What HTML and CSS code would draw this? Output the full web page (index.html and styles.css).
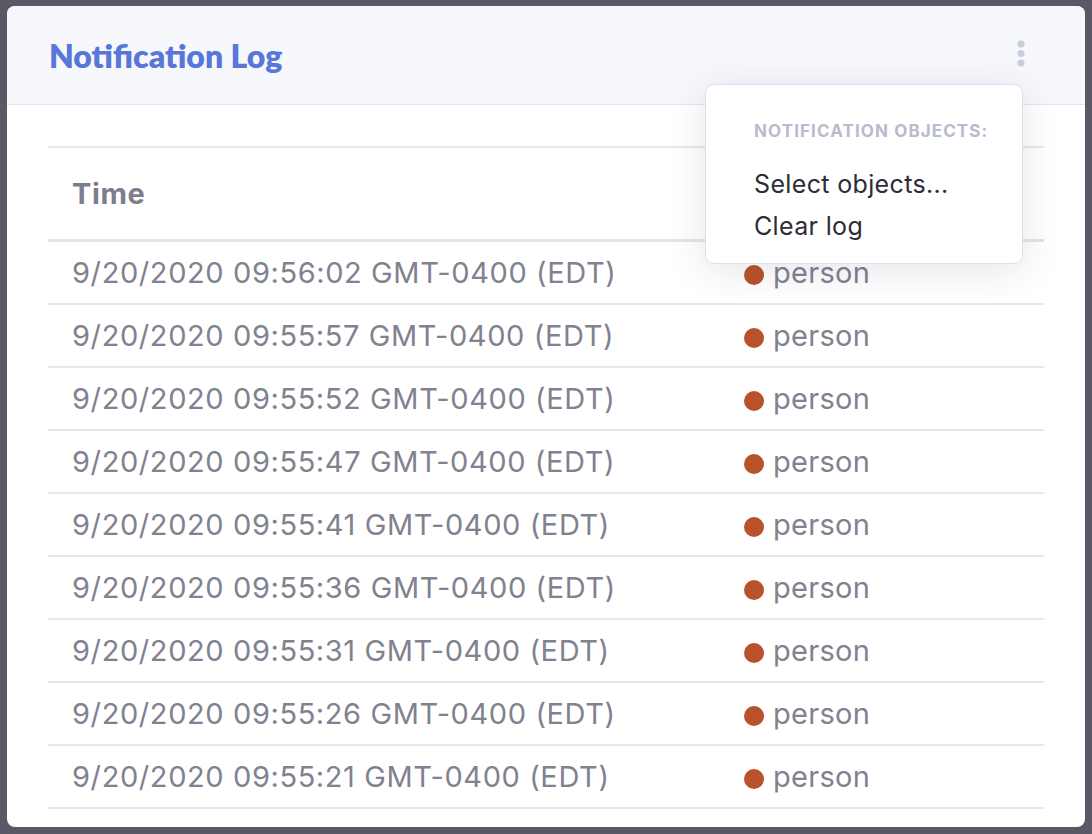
FILE: index.html
```html
<!DOCTYPE html>
<html>
<head>
<meta charset="utf-8">
<link rel="stylesheet" href="styles.css">
</head>
<body>
<div class="card">
  <div class="card-header">
    <h1 class="title">Notification Log</h1>
    <button class="kebab" aria-label="menu">
      <svg width="8" height="28" viewBox="0 0 8 28"><circle cx="4" cy="4" r="3.6" fill="#cbcddd"/><circle cx="4" cy="13.5" r="3.6" fill="#cbcddd"/><circle cx="4" cy="23" r="3.6" fill="#cbcddd"/></svg>
    </button>
    <div class="menu">
      <div class="menu-heading">NOTIFICATION OBJECTS:</div>
      <div class="menu-item">Select objects...</div>
      <div class="menu-item">Clear log</div>
    </div>
  </div>
  <div class="card-body">
    <table class="log">
      <thead>
        <tr><th class="c1">Time</th><th class="c2"></th></tr>
      </thead>
      <tbody>
        <tr><td>9/20/2020 09:56:02 GMT-0400 (EDT)</td><td class="obj"><span class="dot"></span>person</td></tr>
        <tr><td>9/20/2020 09:55:57 GMT-0400 (EDT)</td><td class="obj"><span class="dot"></span>person</td></tr>
        <tr><td>9/20/2020 09:55:52 GMT-0400 (EDT)</td><td class="obj"><span class="dot"></span>person</td></tr>
        <tr><td>9/20/2020 09:55:47 GMT-0400 (EDT)</td><td class="obj"><span class="dot"></span>person</td></tr>
        <tr><td>9/20/2020 09:55:41 GMT-0400 (EDT)</td><td class="obj"><span class="dot"></span>person</td></tr>
        <tr><td>9/20/2020 09:55:36 GMT-0400 (EDT)</td><td class="obj"><span class="dot"></span>person</td></tr>
        <tr><td>9/20/2020 09:55:31 GMT-0400 (EDT)</td><td class="obj"><span class="dot"></span>person</td></tr>
        <tr><td>9/20/2020 09:55:26 GMT-0400 (EDT)</td><td class="obj"><span class="dot"></span>person</td></tr>
        <tr><td>9/20/2020 09:55:21 GMT-0400 (EDT)</td><td class="obj"><span class="dot"></span>person</td></tr>
      </tbody>
    </table>
  </div>
</div>
</body>
</html>
```

FILE: styles.css
```css
html, body {
  margin: 0;
  padding: 0;
  background: #585965;
  height: 100%;
  overflow: hidden;
}
body {
  padding: 6px 7px 0 7px;
  box-sizing: border-box;
  font-family: Inter, "Noto Sans", sans-serif;
}
.card {
  width: 1078px;
  height: 821px;
  background: #fff;
  border-radius: 8px;
  overflow: hidden;
  display: flex;
  flex-direction: column;
}
.card-header {
  position: relative;
  height: 98px;
  flex: none;
  background: #f7f8fc;
  border-bottom: 1px solid #e1e2ec;
  display: flex;
  align-items: center;
  justify-content: space-between;
  padding: 0 60px 0 42px;
}
.title {
  margin: 0;
  font-family: Lato, "Noto Sans", sans-serif;
  font-weight: 800;
  font-size: 32px;
  color: #5877d9;
  letter-spacing: 0;
}
.kebab {
  border: 0;
  background: none;
  padding: 0;
  display: flex;
  margin-top: -3px;
}
.menu {
  position: absolute;
  left: 698px;
  top: 78px;
  width: 316px;
  height: 178px;
  background: #fff;
  border: 1px solid #dfe0ec;
  border-radius: 9px;
  box-shadow: 0 6px 40px rgba(40, 40, 70, 0.12);
  box-sizing: content-box;
  padding: 0;
  z-index: 5;
}
.menu-heading {
  margin: 36px 0 0 48px;
  font-size: 17px;
  font-weight: 700;
  color: #b8bbcc;
  letter-spacing: 1.1px;
  line-height: 20px;
}
.menu-heading + .menu-item {
  margin-top: 22px;
}
.menu-item {
  margin-left: 48px;
  font-size: 25px;
  letter-spacing: 0.35px;
  color: #2c2d39;
  line-height: 42px;
}
.card-body {
  padding: 41px 41px 0 41px;
}
.log {
  width: 996px;
  border-collapse: collapse;
  table-layout: fixed;
  border-top: 2px solid #e6e7ef;
}
.log th {
  text-align: left;
  height: 91px;
  padding: 0 0 0 24px;
  font-size: 29px;
  letter-spacing: 0.6px;
  font-weight: 700;
  color: #7c7e8b;
  border-bottom: 3px solid #e3e4ee;
}
.log th.c1 { width: 649px; }
.log td {
  height: 61px;
  padding: 0 0 0 24px;
  font-size: 29px;
  letter-spacing: 0.6px;
  color: #80828f;
  border-bottom: 2px solid #e5e6ef;
  white-space: nowrap;
}
.log td.obj {
  padding-left: 23px;
  letter-spacing: 0.3px;
}
.dot {
  display: inline-block;
  width: 20px;
  height: 20px;
  border-radius: 50%;
  background: #b9522a;
  margin-right: 9px;
  vertical-align: -2px;
}
```
